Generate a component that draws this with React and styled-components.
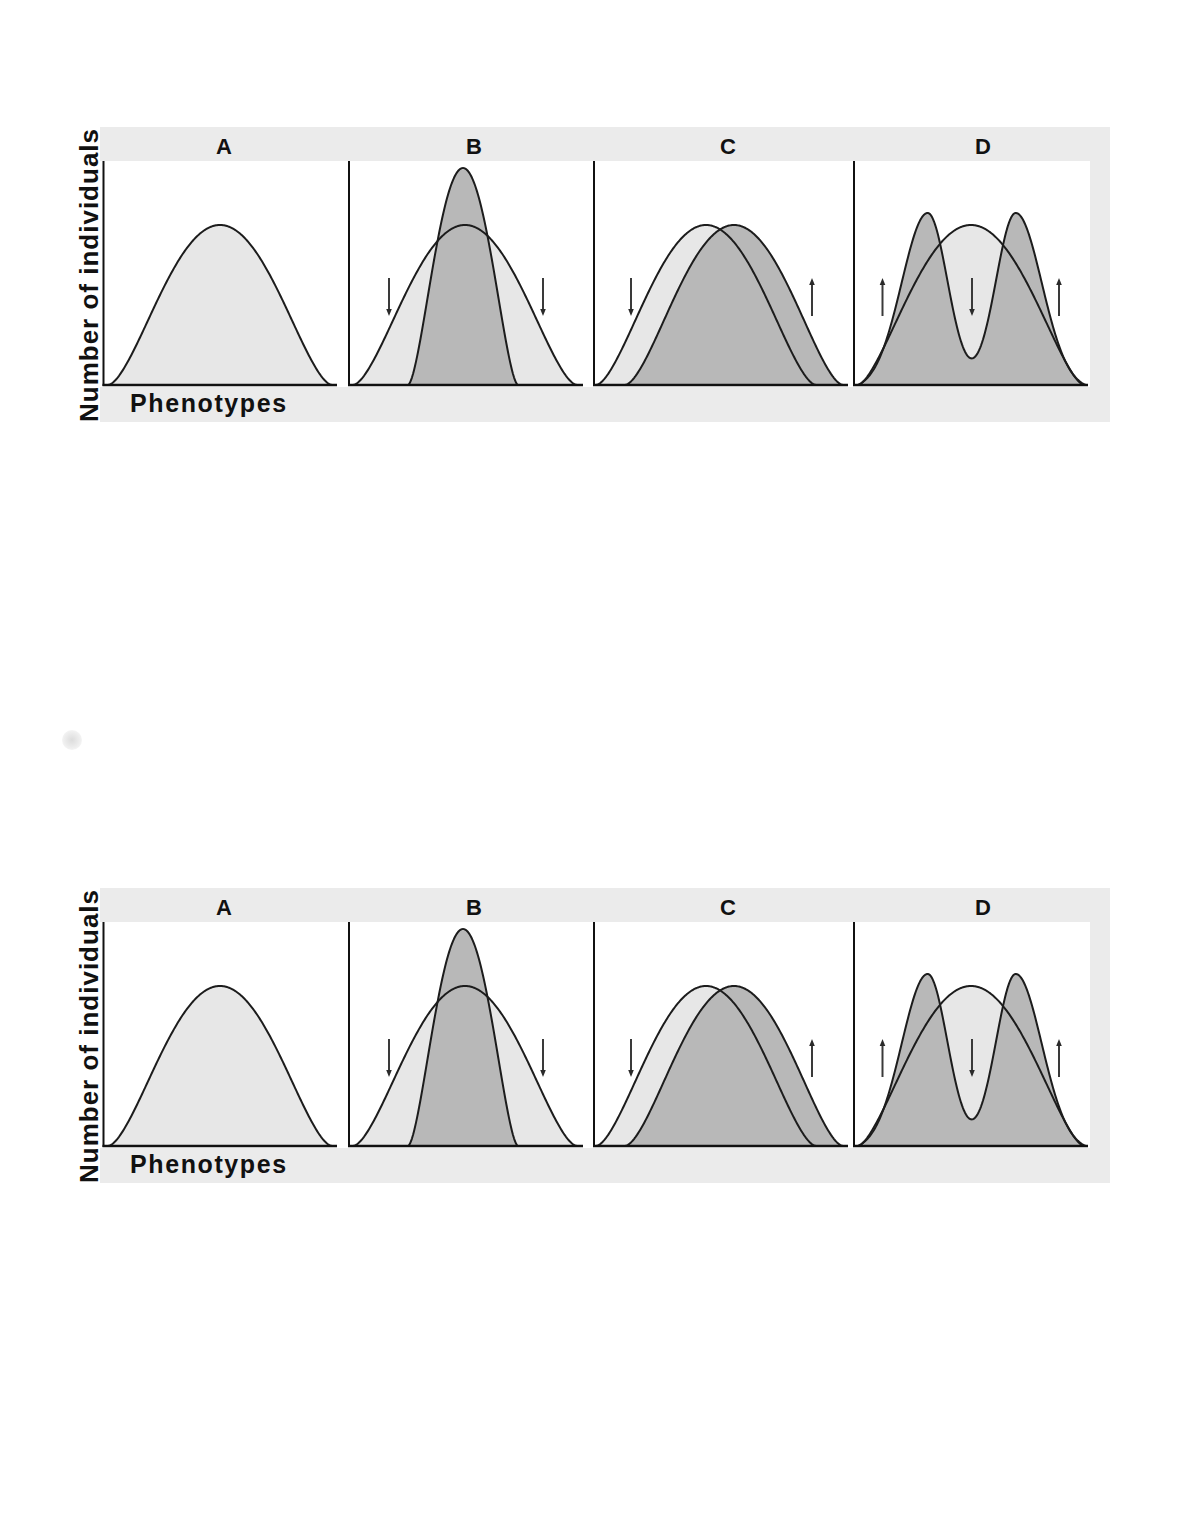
import React from 'react'
import styled, { createGlobalStyle } from 'styled-components'

const GlobalStyle = createGlobalStyle`
  body {
    margin: 0;
    background: #fff;
    font-family: "Liberation Sans", Arial, sans-serif;
  }
`

const Page = styled.div`
  width: 1180px;
  height: 1527px;
  padding-top: 127px;
  box-sizing: border-box;
`

const Figure = styled.figure`
  margin: 0 0 0 78px;
  display: flex;
  align-items: flex-start;
`

const YLabel = styled.div`
  writing-mode: vertical-rl;
  transform: rotate(180deg);
  width: 22px;
  height: 295px;
  font-size: 26px;
  font-weight: 700;
  letter-spacing: 1px;
  line-height: 22px;
  text-align: center;
  white-space: nowrap;
  color: #111;
`

const Board = styled.div`
  width: 1010px;
  height: 295px;
  background: #ebebeb;
  display: flex;
  flex-direction: column;
`

const HeaderRow = styled.div`
  display: grid;
  grid-template-columns: 248px 252px 256px 254px;
  height: 34px;
`

const Letter = styled.div`
  font-size: 22px;
  font-weight: 700;
  line-height: 1;
  padding-top: 9px;
  text-align: center;
  color: #111;
`

const PlotRow = styled.div`
  display: grid;
  grid-template-columns: 248px 245px 260px 237px;
  height: 226px;
  margin-right: 20px;
  background: #fff;
`

const PanelSvg = styled.svg`
  display: block;
  width: 100%;
  height: 226px;
`

const Footer = styled.div`
  height: 35px;
  padding: 4px 0 0 30px;
  box-sizing: border-box;
  font-size: 25px;
  font-weight: 700;
  letter-spacing: 1.6px;
  line-height: 1;
  color: #111;
`

const Spacer = styled.div`
  height: 466px;
  padding: 308px 0 0 62px;
  box-sizing: border-box;
`

const Smudge = styled.div`
  width: 20px;
  height: 20px;
  border-radius: 50%;
  background: radial-gradient(circle, #dcdcdc 0%, #eeeeee 55%, rgba(255, 255, 255, 0) 100%);
`

const BASE = 224
const LIGHT = '#e7e7e7'
const DARK = '#b8b8b8'
const INK = '#1c1c1c'

// bell with flat shoulders and feet tangent to the baseline
const bell = (c, w, h, k = 1.7) => (x) => {
  const u = (x - c) / w
  return Math.abs(u) >= 1 ? 0 : h * Math.pow(1 - u * u, k)
}

// two-peaked curve: each peak steeper on the inner side, tails cut to reach the baseline
const twin = (m1, m2, outer, inner, h, edge) => {
  const raw = (x) => {
    const g = (m, s) => Math.exp(-((x - m) ** 2) / (2 * s * s))
    return g(m1, x < m1 ? outer : inner) + g(m2, x > m2 ? outer : inner)
  }
  const floor = raw(edge)
  return (x) => Math.max(0, (h * (raw(x) - floor)) / (1 - floor))
}

const toPath = (fn, from, to, close) => {
  let d = `M${from} ${BASE}`
  for (let x = from; x <= to; x += 1) {
    d += `L${x} ${(BASE - fn(x)).toFixed(2)}`
  }
  d += `L${to} ${BASE}`
  return close ? d + 'Z' : d
}

const panels = [
  {
    letter: 'A',
    left: 100,
    width: 248,
    axis: 103.5,
    end: 337,
    curves: [{ fn: bell(220, 112, 160), from: 108, to: 332, fill: LIGHT }],
    arrows: [],
  },
  {
    letter: 'B',
    left: 348,
    width: 245,
    axis: 349,
    end: 583,
    curves: [
      { fn: bell(465, 112, 160), from: 353, to: 577, fill: LIGHT },
      { fn: bell(463, 55, 217), from: 408, to: 518, fill: DARK },
    ],
    arrows: [
      { x: 389, dir: 'down' },
      { x: 543, dir: 'down' },
    ],
  },
  {
    letter: 'C',
    left: 593,
    width: 260,
    axis: 594,
    end: 848,
    curves: [
      { fn: bell(706, 110, 160), from: 596, to: 816, fill: LIGHT },
      { fn: bell(734, 109, 160), from: 625, to: 843, fill: DARK },
    ],
    arrows: [
      { x: 631, dir: 'down' },
      { x: 812, dir: 'up' },
    ],
  },
  {
    letter: 'D',
    left: 853,
    width: 237,
    axis: 854,
    end: 1088,
    curves: [
      { fn: bell(971, 113, 160, 1.6), from: 858, to: 1084, fill: LIGHT },
      { fn: twin(927.7, 1015.7, 26, 20, 172, 858), from: 858, to: 1086, fill: DARK },
    ],
    arrows: [
      { x: 882.5, dir: 'up' },
      { x: 972, dir: 'down' },
      { x: 1059, dir: 'up' },
    ],
  },
]

const Arrow = ({ x, dir }) => {
  const top = 117
  const bottom = 155
  const tip = dir === 'up' ? top : bottom
  const back = dir === 'up' ? tip + 7 : tip - 7
  return (
    <g>
      <line
        x1={x}
        x2={x}
        y1={dir === 'up' ? top + 5 : top}
        y2={dir === 'up' ? bottom : bottom - 5}
        stroke="#3a3a3a"
        strokeWidth="2"
      />
      <polygon points={`${x - 2.8},${back} ${x + 2.8},${back} ${x},${tip}`} fill="#2a2a2a" />
    </g>
  )
}

const Panel = ({ panel }) => (
  <PanelSvg viewBox={`${panel.left} 0 ${panel.width} 226`} preserveAspectRatio="none">
    {panel.curves.map((c, i) => (
      <path key={`f${i}`} d={toPath(c.fn, c.from, c.to, true)} fill={c.fill} />
    ))}
    {panel.curves.map((c, i) => (
      <path
        key={`o${i}`}
        d={toPath(c.fn, c.from, c.to, false)}
        fill="none"
        stroke={INK}
        strokeWidth="2"
        strokeLinejoin="round"
      />
    ))}
    {panel.arrows.map((a, i) => (
      <Arrow key={i} {...a} />
    ))}
    <line x1={panel.axis} x2={panel.axis} y1="0" y2={BASE + 1} stroke="#111" strokeWidth="2" />
    <line x1={panel.axis - 1} x2={panel.end} y1={BASE} y2={BASE} stroke="#111" strokeWidth="2.4" />
  </PanelSvg>
)

const Chart = () => (
  <Figure>
    <YLabel>Number of individuals</YLabel>
    <Board>
      <HeaderRow>
        {panels.map((p) => (
          <Letter key={p.letter}>{p.letter}</Letter>
        ))}
      </HeaderRow>
      <PlotRow>
        {panels.map((p) => (
          <Panel key={p.letter} panel={p} />
        ))}
      </PlotRow>
      <Footer>Phenotypes</Footer>
    </Board>
  </Figure>
)

const App = () => (
  <Page>
    <GlobalStyle />
    <Chart />
    <Spacer>
      <Smudge />
    </Spacer>
    <Chart />
  </Page>
)

export default App
